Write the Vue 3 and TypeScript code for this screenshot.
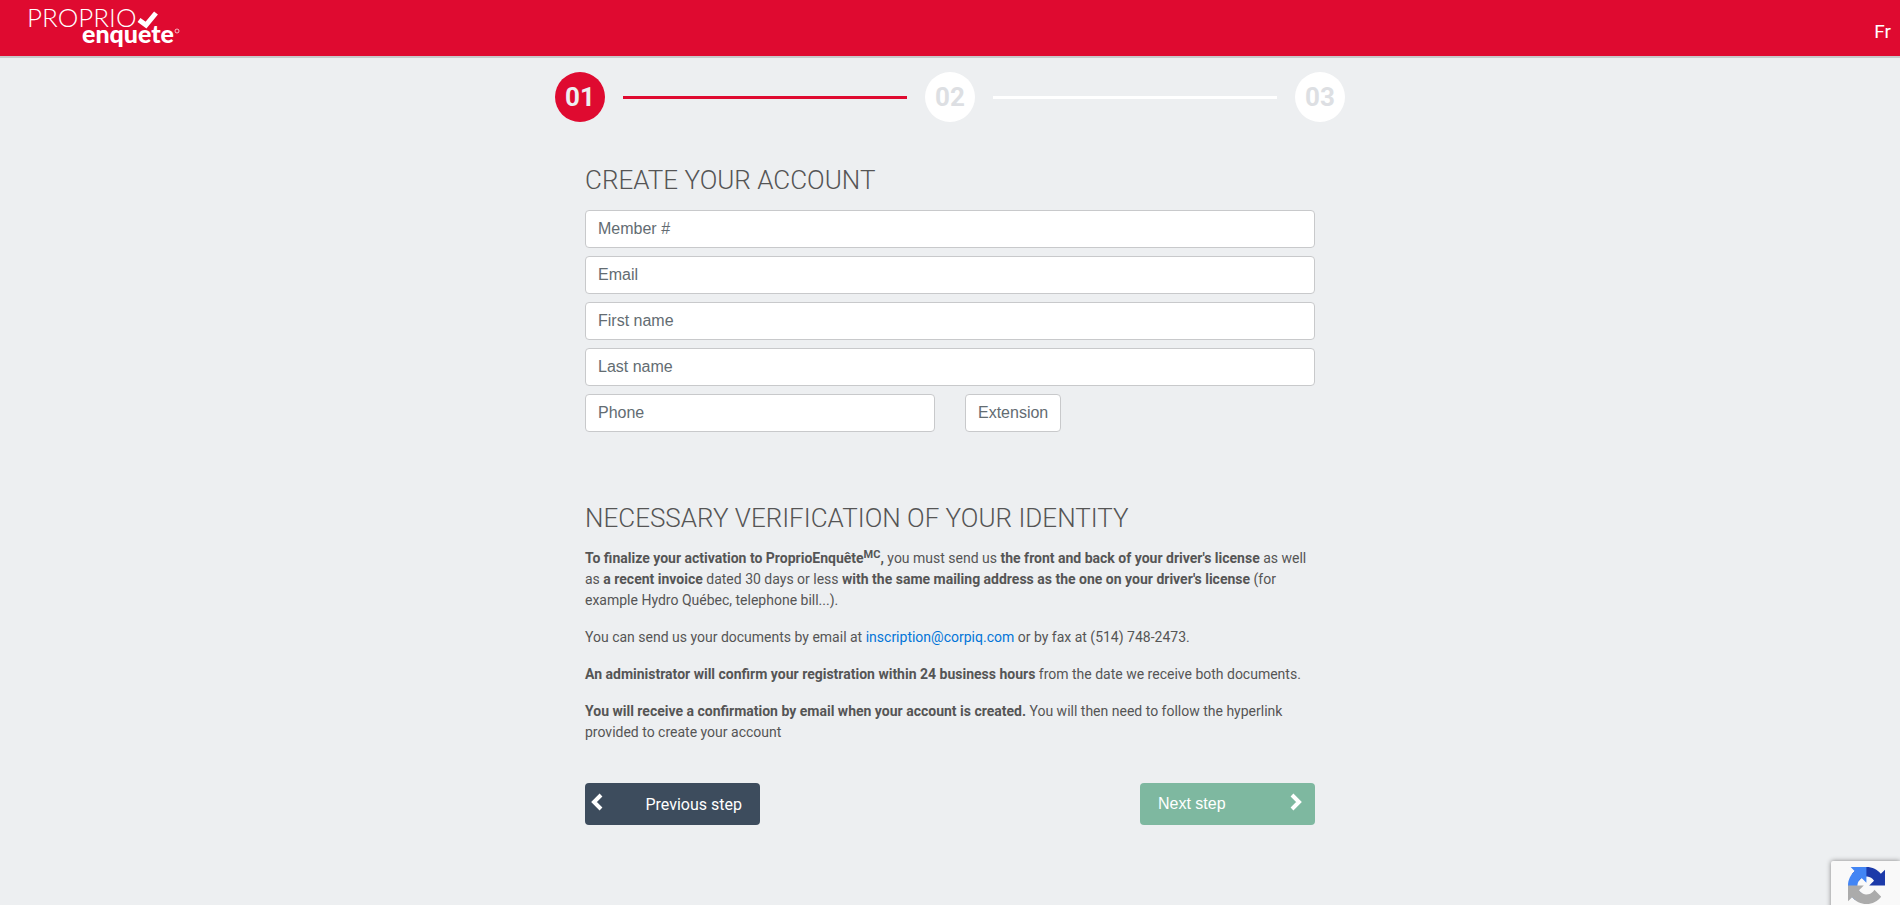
<script setup lang="ts">
import { ref } from 'vue'

interface Field {
  id: string
  label: string
  type: string
}

const fields: Field[] = [
  { id: 'member', label: 'Member #', type: 'text' },
  { id: 'email', label: 'Email', type: 'email' },
  { id: 'first-name', label: 'First name', type: 'text' },
  { id: 'last-name', label: 'Last name', type: 'text' },
]

const contactFields: Field[] = [
  { id: 'phone', label: 'Phone', type: 'tel' },
  { id: 'extension', label: 'Extension', type: 'text' },
]

const values = ref<Record<string, string>>({})
const steps = ['01', '02', '03']
const current = 0
</script>

<template>
  <div class="page">
    <header class="topbar">
      <a class="brand" href="#" aria-label="Proprio enquete">
        <svg class="logo" width="152" height="44" viewBox="0 0 152 44">
          <text class="logo-thin" x="-1" y="21">PROPRIO</text>
          <text class="logo-bold" x="54" y="37">enquete</text>
          <path d="M111 14l7 5 10-12" fill="none" stroke="#fff" stroke-width="5" />
          <circle cx="149" cy="25" r="2" fill="none" stroke="#fff" stroke-opacity="0.7" />
        </svg>
      </a>
      <a class="lang" href="#">Fr</a>
    </header>

    <main>
      <ol class="steps">
        <template v-for="(step, i) in steps" :key="step">
          <li v-if="i > 0" class="bar" :class="{ active: i - 1 === current }" aria-hidden="true"></li>
          <li class="step" :class="{ active: i === current }">{{ step }}</li>
        </template>
      </ol>

      <form class="form" @submit.prevent>
        <h1>CREATE YOUR ACCOUNT</h1>
        <div class="fields">
          <input
            v-for="f in fields"
            :id="f.id"
            :key="f.id"
            v-model="values[f.id]"
            :type="f.type"
            :placeholder="f.label"
            :aria-label="f.label"
          />
          <div class="contact">
            <input
              v-for="f in contactFields"
              :id="f.id"
              :key="f.id"
              v-model="values[f.id]"
              :class="f.id"
              :type="f.type"
              :placeholder="f.label"
              :aria-label="f.label"
            />
          </div>
        </div>

        <section class="identity">
          <h2>NECESSARY VERIFICATION OF YOUR IDENTITY</h2>
          <p>
            <strong>To finalize your activation to ProprioEnquête<sup>MC</sup>,</strong> you must send us
            <strong>the front and back of your driver's license</strong> as well as
            <strong>a recent invoice</strong> dated 30 days or less
            <strong>with the same mailing address as the one on your driver's license</strong> (for example
            Hydro Québec, telephone bill...).
          </p>
          <p>
            You can send us your documents by email at
            <a href="mailto:inscription@corpiq.com">inscription@corpiq.com</a> or by fax at (514) 748-2473.
          </p>
          <p>
            <strong>An administrator will confirm your registration within 24 business hours</strong> from the
            date we receive both documents.
          </p>
          <p>
            <strong>You will receive a confirmation by email when your account is created.</strong> You will
            then need to follow the hyperlink provided to create your account
          </p>
        </section>

        <div class="actions">
          <button type="button" class="prev">
            <svg width="14" height="18" viewBox="0 0 14 18" aria-hidden="true">
              <path d="M11 2L4 9l7 7" />
            </svg>
            <span>Previous step</span>
          </button>
          <button type="submit" class="next">
            <span>Next step</span>
            <svg width="14" height="18" viewBox="0 0 14 18" aria-hidden="true">
              <path d="M3 2l7 7-7 7" />
            </svg>
          </button>
        </div>
      </form>
    </main>

    <aside class="captcha" aria-label="reCAPTCHA">
      <svg width="37" height="37" viewBox="0 0 64 64" aria-hidden="true">
        <path fill="#1c3aa9" d="M64 31.955l-.033-1.37V4.687l-7.16 7.16C50.948 4.674 42.033.093 32.05.093c-10.389 0-19.622 4.96-25.458 12.64l11.736 11.86a15.55 15.55 0 0 1 4.754-5.334c2.05-1.6 4.954-2.907 8.968-2.907.485 0 .859.057 1.134.163 4.973.393 9.283 3.137 11.822 7.12l-8.307 8.307L64 31.953" />
        <path fill="#4285f4" d="M31.862.094l-1.37.033H4.594l7.16 7.16C4.58 13.147 0 22.06 0 32.046c0 10.388 4.96 19.622 12.64 25.458L24.5 45.768a15.55 15.55 0 0 1-5.334-4.754c-1.6-2.05-2.907-4.954-2.907-8.968 0-.485.057-.859.163-1.134.393-4.973 3.137-9.283 7.12-11.822l8.307 8.307L31.86.095" />
        <path fill="#ababab" d="M.001 32.045l.033 1.37v25.898l7.16-7.16c5.86 7.173 14.774 11.754 24.76 11.754 10.388 0 19.622-4.96 25.458-12.64l-11.736-11.86a15.55 15.55 0 0 1-4.754 5.334c-2.05 1.6-4.954 2.907-8.968 2.907-.485 0-.859-.057-1.134-.163-4.973-.393-9.283-3.137-11.822-7.12l8.307-8.307c-10.522.04-22.4.066-27.295-.005" />
      </svg>
    </aside>
  </div>
</template>

<style>
body {
  margin: 0;
  background: #edeff1;
}
</style>

<style scoped>
.page {
  min-height: 100vh;
  background: #edeff1;
  color: #555;
  font-family: Roboto, sans-serif;
  font-size: 14px;
  line-height: 21px;
}

.topbar {
  display: flex;
  justify-content: space-between;
  align-items: center;
  height: 56px;
  padding: 0 9px 0 28px;
  border-bottom: 2px solid #c8c9cb;
  background: #df0a30;
}

.brand {
  display: flex;
}

.logo {
  overflow: visible;
  fill: #fff;
}

.logo-thin {
  font: 300 26px Lato, sans-serif;
}

.logo-bold {
  font: 900 25px Lato, sans-serif;
}

.lang {
  padding-top: 8px;
  color: #fff;
  font-size: 19px;
  line-height: 24px;
  text-decoration: none;
}

.steps {
  display: flex;
  align-items: center;
  gap: 18px;
  max-width: 790px;
  margin: 0 auto;
  padding: 14px 0 0;
  list-style: none;
}

.step {
  width: 50px;
  border-radius: 50%;
  background: #fff;
  color: #dddfe3;
  font-size: 26px;
  font-weight: 700;
  line-height: 50px;
  text-align: center;
}

.step.active {
  background: #df0a30;
  color: #edeff1;
}

.bar {
  flex: 1;
  height: 3px;
  background: #fff;
}

.bar.active {
  background: #df0a30;
}

.form {
  max-width: 730px;
  margin: 0 auto;
  padding: 42px 0 80px;
}

h1,
h2 {
  margin: 0 0 14px;
  font-size: 26px;
  font-weight: 300;
  line-height: 32px;
}

.fields {
  display: flex;
  flex-direction: column;
  gap: 8px;
}

.contact {
  display: flex;
  gap: 30px;
}

input {
  box-sizing: border-box;
  width: 100%;
  height: 38px;
  padding: 0 12px;
  border: 1px solid #c8c9cb;
  border-radius: 4px;
  background: #fff;
  color: #464a4c;
  font: 16px "Liberation Sans", Arial, sans-serif;
}

input::placeholder {
  color: #636c72;
  opacity: 1;
}

.phone {
  width: 350px;
}

.extension {
  width: 96px;
}

.identity {
  padding-top: 70px;
}

p {
  margin: 0 0 16px;
}

strong {
  font-weight: 700;
}

sup {
  position: relative;
  top: -5px;
  font-size: 11px;
  line-height: 0;
  vertical-align: baseline;
}

p a {
  color: #0275d8;
  text-decoration: none;
}

.actions {
  display: flex;
  justify-content: space-between;
  padding-top: 24px;
}

button {
  display: flex;
  justify-content: space-between;
  align-items: center;
  width: 175px;
  height: 42px;
  border: 0;
  border-radius: 4px;
  color: #fff;
  font: 16px Roboto, sans-serif;
}

button svg {
  margin-bottom: 4px;
  fill: none;
  stroke: #fff;
  stroke-width: 4;
}

.prev {
  padding: 0 18px 0 5px;
  background: #3d4c5d;
}

.next {
  padding: 0 12px 0 18px;
  background: #7eb8a0;
  font: 16px/20px "Liberation Sans", Arial, sans-serif;
}

.captcha {
  position: fixed;
  right: 0;
  bottom: -16px;
  box-sizing: border-box;
  width: 69px;
  height: 60px;
  padding: 6px 0 0 17px;
  border-radius: 2px 0 0 2px;
  background: #f9f9f9;
  box-shadow: 0 0 5px gray;
}
</style>
